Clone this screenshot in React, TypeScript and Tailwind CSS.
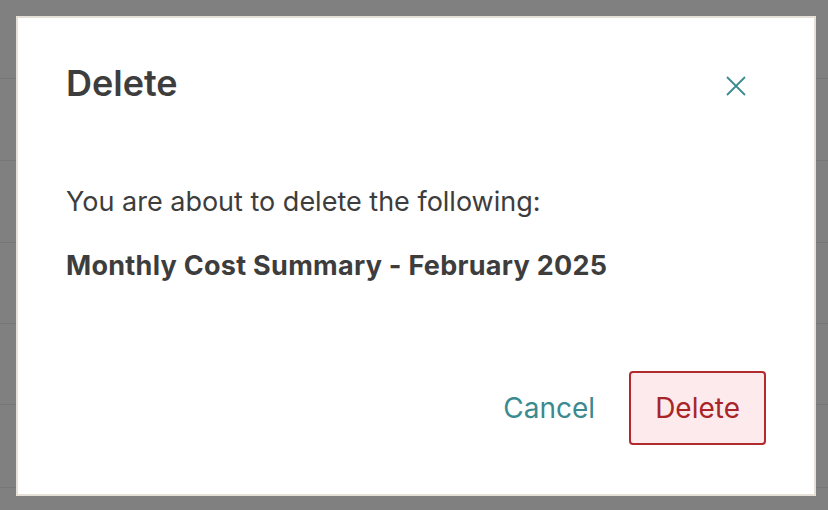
import React from "react";

export default function App() {
  const lines = [78, 160, 242, 323, 404, 487];
  return (
    <div
      className="relative w-[828px] h-[510px] bg-[#808080] overflow-hidden"
      style={{ fontFamily: "Inter, 'Noto Sans', sans-serif" }}
    >
      {lines.map((y) => (
        <div
          key={y}
          className="absolute left-0 right-0 h-px bg-[#767676]"
          style={{ top: y }}
        />
      ))}
      <div className="absolute left-[16px] top-[16px] w-[800px] h-[480px] bg-white border-2 border-[#e6e1d6] flex flex-col px-12 pb-[49px]">
        <div className="flex items-center justify-between pt-[43px]">
          <h1 className="text-[36px] leading-[44px] font-semibold text-[#3d3d3d]">
            Delete
          </h1>
          <button className="w-5 h-5 mt-[6px] mr-[20px] flex items-center justify-center text-[#3b8a90]">
            <svg width="20" height="20" viewBox="0 0 20 20" fill="none" stroke="currentColor" strokeWidth="1.8">
              <path d="M1 1L19 19M19 1L1 19" />
            </svg>
          </button>
        </div>
        <p className="mt-[81px] text-[27px] leading-[32px] text-[#3d3d3d]">
          You are about to delete the following:
        </p>
        <p className="mt-[32px] text-[27px] leading-[32px] font-bold tracking-[0.28px] text-[#3d3d3d]">
          Monthly Cost Summary - February 2025
        </p>
        <div className="mt-auto flex items-center justify-end gap-[34px]">
          <button className="text-[28px] leading-[32px] text-[#3b8a90]">Cancel</button>
          <button className="h-[74px] px-[24px] rounded-[4px] border-2 border-[#b02a2e] bg-[#fdeaec] text-[28px] leading-[32px] text-[#a82428]">
            Delete
          </button>
        </div>
      </div>
    </div>
  );
}
